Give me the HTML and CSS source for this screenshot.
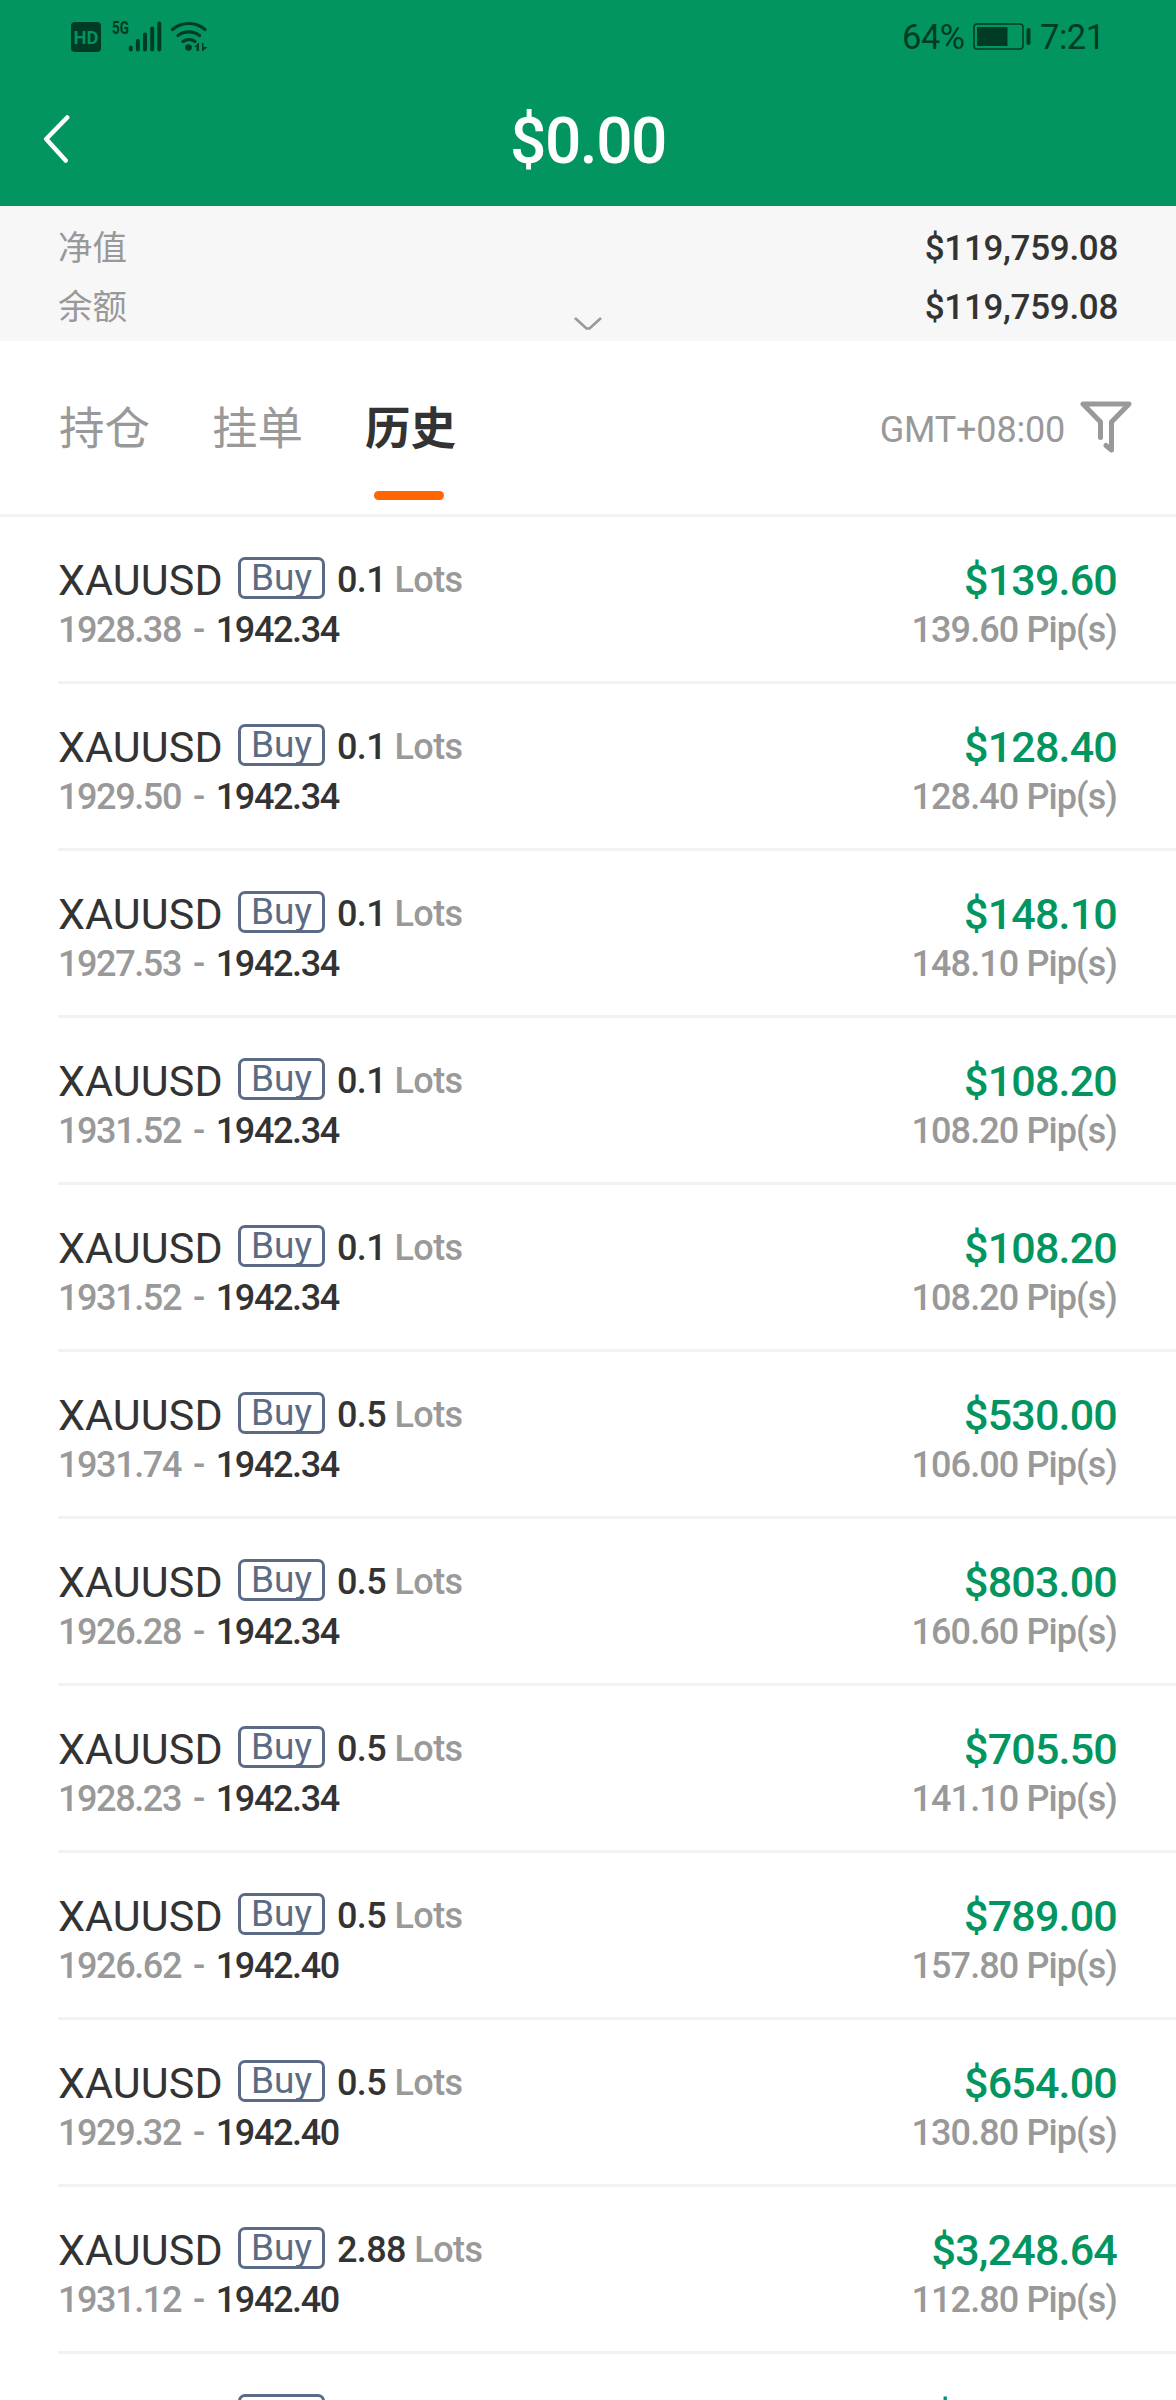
FILE: index.html
```html
<!DOCTYPE html>
<html lang="zh-CN">
<head>
<meta charset="utf-8">
<title>历史</title>
<link rel="stylesheet" href="styles.css">
</head>
<body>
<div class="screen">
  <header class="header">
    <div class="status">
      <svg class="status-left" width="144" height="44" viewBox="0 0 144 44">
        <rect x="1" y="12" width="30" height="30" rx="4"/>
        <text class="hd" x="3.5" y="34" textLength="25" lengthAdjust="spacingAndGlyphs">HD</text>
        <text class="five-g" x="42" y="24" textLength="17" lengthAdjust="spacingAndGlyphs">5G</text>
        <g class="bars"><path d="M60.800 37.500v2M67.900 31v8.500M75 24.500v15M82.200 18.500v21M89.300 13.500v26"/></g>
        <g class="waves"><path d="M102.500 19.500a25 25 0 0 1 32.500 0M108 25.500a18 18 0 0 1 21.500 0M113 31.500a10 10 0 0 1 12 0"/></g>
        <circle cx="118.500" cy="37.500" r="3.300"/>
        <path d="M124 37l5-4.500V41h-2.500v-4zM132 41.500v-8.500h1.500v4h4z"/>
      </svg>
      <div class="status-right">
        <span class="status-text battery-level">64%</span>
        <svg class="battery" width="60" height="30" viewBox="0 0 60 30">
          <rect class="shell" x="2" y="2" width="49" height="25" rx="3"/>
          <rect x="5" y="5" width="30.500" height="19"/>
          <rect x="54.500" y="6" width="4" height="17" rx="2"/>
        </svg>
        <span class="status-text clock">7:21</span>
      </div>
    </div>
    <div class="title-bar">
      <svg class="back" width="30" height="50" viewBox="0 0 30 50"><path d="M27.200 3.500L6.200 25L25.700 46.500"/></svg>
      <h1 class="title num">$0.00</h1>
    </div>
  </header>
  <section class="summary">
    <div class="summary-row"><span class="label">净值</span><span class="total num">$119,759.08</span></div>
    <div class="summary-row"><span class="label">余额</span><svg class="expand" width="28" height="16" viewBox="0 0 28 16"><path d="M1 1l11.500 10.500h3L27 1"/></svg><span class="total num">$119,759.08</span></div>
  </section>
  <nav class="tabs">
    <span class="tab">持仓</span>
    <span class="tab">挂单</span>
    <span class="tab active">历史</span>
    <span class="zone">GMT+08:00</span>
    <svg class="filter" width="52" height="54" viewBox="0 0 52 54"><path d="M20.500 37.500V22L3 4H49L31.500 22V50L26 45.500"/></svg>
  </nav>
  <main class="list" id="list"></main>
</div>
<script src="rows.js"></script>
</body>
</html>
```
FILE: rows.js
```js
const trades = [
  ["0.1", "1928.38", "1942.34", "$139.60", "139.60"],
  ["0.1", "1929.50", "1942.34", "$128.40", "128.40"],
  ["0.1", "1927.53", "1942.34", "$148.10", "148.10"],
  ["0.1", "1931.52", "1942.34", "$108.20", "108.20"],
  ["0.1", "1931.52", "1942.34", "$108.20", "108.20"],
  ["0.5", "1931.74", "1942.34", "$530.00", "106.00"],
  ["0.5", "1926.28", "1942.34", "$803.00", "160.60"],
  ["0.5", "1928.23", "1942.34", "$705.50", "141.10"],
  ["0.5", "1926.62", "1942.40", "$789.00", "157.80"],
  ["0.5", "1929.32", "1942.40", "$654.00", "130.80"],
  ["2.88", "1931.12", "1942.40", "$3,248.64", "112.80"]
];
const rows = trades.map(([lots, open, close, profit, pips]) => `
  <article class="trade">
    <div class="line top">
      <span class="symbol">XAUUSD</span><span class="side">Buy</span>
      <span class="lots num"><b>${lots}</b> <span class="unit">Lots</span></span>
      <span class="profit num">${profit}</span>
    </div>
    <div class="line bottom">
      <span class="prices num">${open}<span class="dash">-</span><b>${close}</b></span>
      <span class="pips num">${pips} Pip(s)</span>
    </div>
  </article>`);
// The next row only peeks in at the bottom of the screen.
rows.push(`
  <article class="trade">
    <div class="line top">
      <span class="symbol"></span><span class="side"></span>
      <span class="profit peek num">$</span>
    </div>
  </article>`);
document.getElementById("list").innerHTML = rows.join("");
```
FILE: styles.css
```css
* { box-sizing: border-box; }
body { margin: 0; background: #fff; font-family: Roboto, "Noto Sans CJK SC", sans-serif; color: #333; }
.screen { width: 1176px; height: 2400px; overflow: hidden; background: #fff; }
.num { font-weight: 500; white-space: nowrap; }
.num b { font-weight: 500; color: #333; }

.header { height: 206px; background: #02955f; color: #fff; }
.status { height: 72px; padding: 10px 74px 0 70px; display: flex; justify-content: space-between; align-items: flex-start; color: #003c25; }
.status svg { fill: #003c25; display: block; }
.status-left .hd { font: 700 18px Roboto, sans-serif; fill: #02955f; }
.status-left .five-g { font: 700 18px Roboto, sans-serif; }
.bars path { stroke: #003c25; stroke-width: 4; stroke-linecap: round; fill: none; }
.waves path { stroke: #003c25; stroke-width: 3.2; stroke-linecap: round; fill: none; }
.status-right { display: flex; height: 54px; align-items: center; }
.status-text { font-size: 34.5px; line-height: 52px; white-space: nowrap; letter-spacing: -.5px; }
.battery-level { width: 70px; }
.clock { width: 62px; margin-left: 8px; }
.status .battery .shell { fill: none; stroke: #003c25; stroke-width: 1.6; }
.title-bar { height: 134px; padding: 42px 40px 0; display: grid; grid-template-columns: 120px 1fr 120px; }
.back { fill: none; stroke: #fff; stroke-width: 4.5; stroke-linecap: round; stroke-linejoin: round; }
.title { margin: 0; text-align: center; font-size: 64px; line-height: 56px; letter-spacing: -1.5px; font-weight: 500; }

.summary { height: 135px; padding: 13px 58px 0; background: #f7f7f7; }
.summary-row { height: 59px; display: grid; grid-template-columns: 1fr 28px 1fr; align-items: center; }
.label { grid-column: 1; font-size: 34.5px; line-height: 59px; color: #999; }
.expand { grid-column: 2; align-self: end; margin-bottom: 4px; fill: none; stroke: #999; stroke-width: 2.6; }
.total { grid-column: 3; justify-self: end; font-size: 35px; letter-spacing: -.3px; }

.tabs { height: 176px; padding: 0 44px 0 59px; border-bottom: 3px solid #f2f2f3; display: flex; align-items: flex-start; }
.tab { position: relative; width: 92px; height: 173px; margin-right: 61px; font-size: 45.5px; line-height: 178px; color: #999; white-space: nowrap; }
.active { font-weight: 700; color: #333; }
.active::after { content: ""; position: absolute; left: 9px; bottom: 14px; width: 70px; height: 9px; border-radius: 5px; background: #ff6600; }
.zone { margin-left: auto; font-size: 36px; line-height: 179px; color: #999; letter-spacing: -.2px; }
.filter { margin: 59px 0 0 15px; fill: none; stroke: #999; stroke-width: 5; stroke-linecap: round; stroke-linejoin: round; }

.trade { height: 167px; margin-left: 58px; padding: 40px 59px 0 0; border-bottom: 3px solid #f2f2f3; }
.line { display: flex; align-items: center; }
.top { height: 45px; }
.bottom { height: 56px; }
.symbol { width: 180px; font-size: 43px; letter-spacing: .1px; line-height: 44px; }
.side { width: 87px; height: 42px; margin-bottom: 3px; border: 3px solid #5c6b85; border-radius: 7px; font-size: 37px; line-height: 36px; text-align: center; color: #5c6b85; }
.lots { margin-left: 12px; font-size: 36px; letter-spacing: -.6px; padding-top: 1px; }
.unit { color: #999; }
.profit { margin-left: auto; color: #02955f; font-size: 43px; letter-spacing: -.8px; }
.peek { margin-right: 161px; }
.prices { color: #999; font-size: 36px; letter-spacing: -1.4px; }
.dash { margin: 0 12px; }
.pips { margin-left: auto; color: #999; font-size: 36px; letter-spacing: -.9px; }
```
